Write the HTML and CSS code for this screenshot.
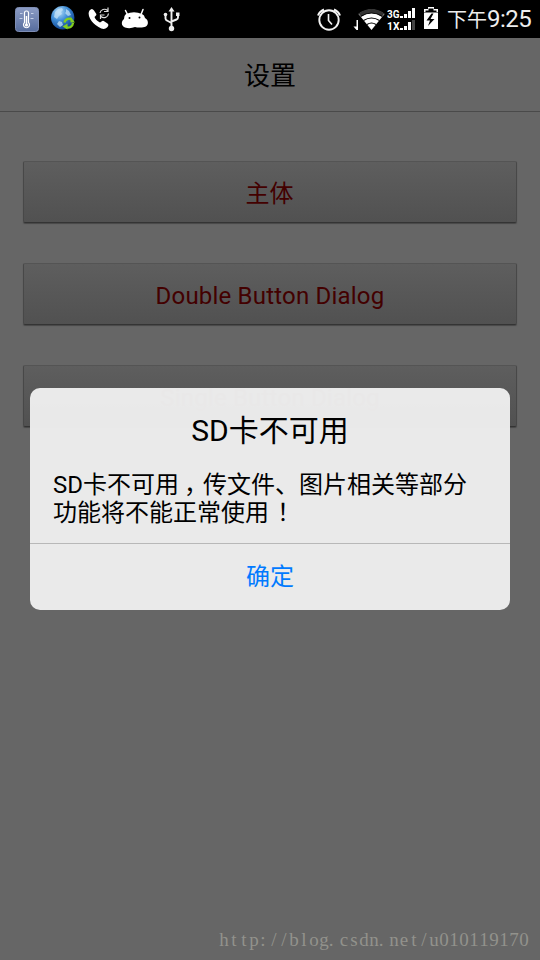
FILE: index.html
```html
<!DOCTYPE html>
<html lang="zh-CN">
<head>
<meta charset="utf-8">
<title>设置</title>
<link rel="stylesheet" href="styles.css">
</head>
<body>
<div class="screen">
  <div class="status">
    <div class="notifications">
      <svg width="24" height="38" viewBox="15 0 24 38">
        <defs><linearGradient id="tile" x2="0" y2="1"><stop stop-color="#8c9cc4"/><stop offset="1" stop-color="#566c9d"/></linearGradient></defs>
        <rect x="15.5" y="7.5" width="23" height="24" rx="3" fill="url(#tile)" stroke="#7f8eb5"/>
        <path d="M24.5 22.5V13a2 2 0 0 1 4 0v9.500a3 3 0 1 1-4 0Z" fill="#7485ae" stroke="#fff" stroke-width="1.200"/>
        <path d="M26.500 16v8" stroke="#fff" stroke-width="1.500"/><circle cx="26.500" cy="25" r="1.600" fill="#fff"/>
        <path d="M20 13.500h2.500M31 13.500h2.500M19.500 18.500h3M30.500 18.500h3" stroke="#c6d0e6"/>
      </svg>
      <svg width="25" height="38" viewBox="51 0 25 38">
        <defs><radialGradient id="globe" cx=".35" cy=".25" r=".8"><stop stop-color="#b8e0fa"/><stop offset=".45" stop-color="#418fd8"/><stop offset="1" stop-color="#0b3e8d"/></radialGradient></defs>
        <circle cx="62.700" cy="17.800" r="11.700" fill="url(#globe)"/>
        <path d="M55 12l3-3 4-1 1 2-2 2 1 2-3 2-2 3-3-2ZM66 9l3 2 2 4-3 1-3-3 1-1ZM59 21l3 1 1 3-3 2-3-3Z" fill="#c3e2f7" opacity=".75"/>
        <path d="M64.500 22.500a4.500 4.300 0 0 1 7-3M73 23a4.800 4.800 0 0 1-7 4" fill="none" stroke="#83cf1d" stroke-width="2.300"/>
        <path d="M70.500 16.500v6h4.500ZM67.500 23.500v6l-5-3Z" fill="#83cf1d"/>
      </svg>
      <svg width="24" height="38" viewBox="88 0 24 38">
        <path d="M89.500 10.500q2.500-3 4.500 0l2 3q1 1.500-.5 2.500l-1 1q1 3 5.500 5.500l1.500-1q1.500-1.500 3 0l3 2q2 1.500-.5 4-3 3-8.500-.5-6-3.500-8.500-8.500-2.500-5-.5-8Z" fill="#fff"/>
        <path d="M100 13a4.500 4.500 0 0 1 7.500-2.500M108.500 13.500a4.500 4.500 0 0 1-7.500 3M108 7.500v4h-4M100.500 19v-4h4" fill="none" stroke="#ddd" stroke-width="1.200"/>
      </svg>
      <svg width="28" height="38" viewBox="121 0 28 38">
        <path d="M125.500 10.500l2 4M143 9.500l-2 5" stroke="#fff" stroke-width="1.500" stroke-linecap="round"/>
        <path d="M126 14Q134 10.500 142 14Q144.500 15 145 18C149 20 149 26 144.500 27Q139 28 135 27Q130 29 125 27.500C121 26 121 21 124 19Q124 15.500 126 14Z" fill="#fff"/>
        <circle cx="129.500" cy="18" r="1"/><circle cx="139.500" cy="17.500" r="1"/>
      </svg>
      <svg width="18" height="38" viewBox="163 0 18 38">
        <path d="M171.500 10v18M165.500 15v3.500q0 1.500 1.500 2l4.500 2.500M178 15v2.500q0 1.500-1.500 2l-5 2" fill="none" stroke="#eee" stroke-width="1.900"/>
        <path d="M171.500 7l3 4.500h-6Z" fill="#eee"/><circle cx="165.500" cy="14.500" r="1.800" fill="#eee"/><path d="M176 12.500h3.500v3.500H176Z" fill="#eee"/><circle cx="171.500" cy="28.500" r="2.700" fill="#eee"/>
      </svg>
    </div>
    <div class="system">
      <svg width="25" height="38" viewBox="317 0 25 38">
        <g fill="none" stroke="#f3f3f3"><circle cx="329" cy="20" r="9.700" stroke-width="1.900"/><path d="M328.500 14v6.500l3.500 4" stroke-width="1.600"/><path d="M318 15.500q1.500-4 6-6M340 15.500q-1.500-4-6-6" stroke-width="2"/></g>
      </svg>
      <svg class="wifi" width="32" height="38" viewBox="353 0 32 38">
        <path d="M358 20v10h-1.500l-3-3.500h3V20Z" fill="#fff"/>
        <path d="M371.500 30l-13-16q13-9 26 0Z" fill="#fff"/>
        <path d="M371.500 9q-7 0-13 4.500l2.500 3q10.500-7 21 0l2.500-3Q378.500 9 371.500 9Z" fill="#333"/>
        <path d="M360.500 16.500q11-7 22 0M363.500 20.500q8-5 16 0M367 24.500q4.500-3 9 0" fill="none" stroke="#000" stroke-width="1.100"/>
      </svg>
      <svg class="cell" width="29" height="38" viewBox="387 0 29 38">
        <g class="net"><text x="387" y="18" textLength="12.500" lengthAdjust="spacingAndGlyphs">3G</text><text x="387" y="30" textLength="12.500" lengthAdjust="spacingAndGlyphs">1X</text></g>
        <path d="M400 16h3v2H400ZM404 14h3v4H404ZM408 11h3v7H408ZM412 8h3v10h-3ZM400 28h3v2H400ZM404 26h3v4H404ZM408 22h3v8H408Z" fill="#fff"/><path d="M412 20h3v10h-3Z" fill="#444"/>
      </svg>
      <svg class="battery" width="15" height="38" viewBox="424 0 15 38">
        <path d="M428 7h6v2h4v3h-1.500v-1.500h-3v-2h-5v2h-3V12H424V9h4ZM424 12.500h14V29h-14Z" fill="#fff"/><path d="M431.500 13.500l-5 7h3.500l-2 5.500 6.500-7h-4l3-5.500Z"/>
      </svg>
      <span class="clock">下午<b>9:25</b></span>
    </div>
  </div>
  <h1 class="header">设置</h1>
  <div class="buttons">
    <div class="button">主体</div>
    <div class="button">Double Button Dialog</div>
    <div class="button">Single Button Dialog</div>
  </div>
  <svg class="watermark" width="310" height="24" viewBox="0 0 310 24"><text y="17" x="5 15 25 35 44 55 65 75 85 95 105 112 125 135 145 155 162 175 185 195 205 215 225 235 245 255 265 275 285 295 305">http://blog.csdn.net/u010119170</text></svg>
  <div class="dialog">
    <h2>SD卡不可用</h2>
    <p>SD卡不可用<span class="comma">，</span>传文件、图片相关等部分<br>功能将不能正常使用<span class="bang">！</span></p>
    <div class="confirm">确定</div>
  </div>
</div>
</body>
</html>
```

FILE: styles.css
```css
* { box-sizing: border-box; }
body { margin: 0; background: #666; font-family: Roboto, "Noto Sans CJK SC", sans-serif; }
.screen { position: relative; width: 540px; height: 960px; overflow: hidden; display: flex; flex-direction: column; background: #666; }
.status { height: 38px; flex: none; background: #000; display: flex; justify-content: space-between; padding: 0 9px 0 15px; }
.notifications, .system { display: flex; }
.notifications { gap: 12px; }
.notifications svg:nth-child(4) { margin-left: -3px; }
.notifications svg:nth-child(5) { margin-left: 2px; }
.wifi { margin-left: 11px; }
.cell { margin-left: 2px; }
.battery { margin-left: 8px; }
.net { fill: #fff; font: 700 11.5px Roboto, sans-serif; }
.clock { margin-left: 8px; width: 84px; font-size: 20px; line-height: 38px; color: #eee; white-space: nowrap; }
.clock b { font-weight: 400; font-size: 24px; letter-spacing: -.5px; }
.header { margin: 0; flex: none; height: 74px; border-bottom: 1px solid #4a4a4a; font-size: 26px; font-weight: 400; line-height: 77px; text-align: center; color: #000; }
.buttons { display: flex; flex-direction: column; gap: 39px; padding: 49px 23px 0; }
.button { height: 62px; margin-bottom: 1px; border: 1px solid #484848; border-top-color: #545454; border-bottom-color: #343434; border-radius: 2px; background: linear-gradient(#5e5e5e, #515151); box-shadow: 0 1px 1px #484848; color: #430000; font-size: 24px; line-height: 65px; text-align: center; letter-spacing: .2px; }
.button:first-child { line-height: 65px; letter-spacing: 0; text-indent: -1px; }
.watermark { margin: auto 11px 7px auto; font: 19px "Liberation Serif", serif; fill: #92928c; text-anchor: middle; }
.dialog { position: absolute; left: 30px; top: 388px; width: 480px; height: 222px; border-radius: 10px; background: rgba(237, 237, 237, .982); color: #000; display: flex; flex-direction: column; }
.dialog h2 { margin: 0; padding-top: 23px; font-size: 30px; font-weight: 400; line-height: 40px; text-align: center; }
.dialog p { margin: 20px 0 0; padding: 0 23px; font-size: 24px; line-height: 28px; white-space: nowrap; }
.comma, .bang { display: inline-block; width: 24px; line-height: 1; }
.comma { text-indent: 5px; }
.bang { text-indent: 8px; }
.confirm { margin-top: auto; height: 67px; border-top: 1px solid #b8b8b8; color: #007aff; font-size: 24px; line-height: 67px; text-align: center; }
```
